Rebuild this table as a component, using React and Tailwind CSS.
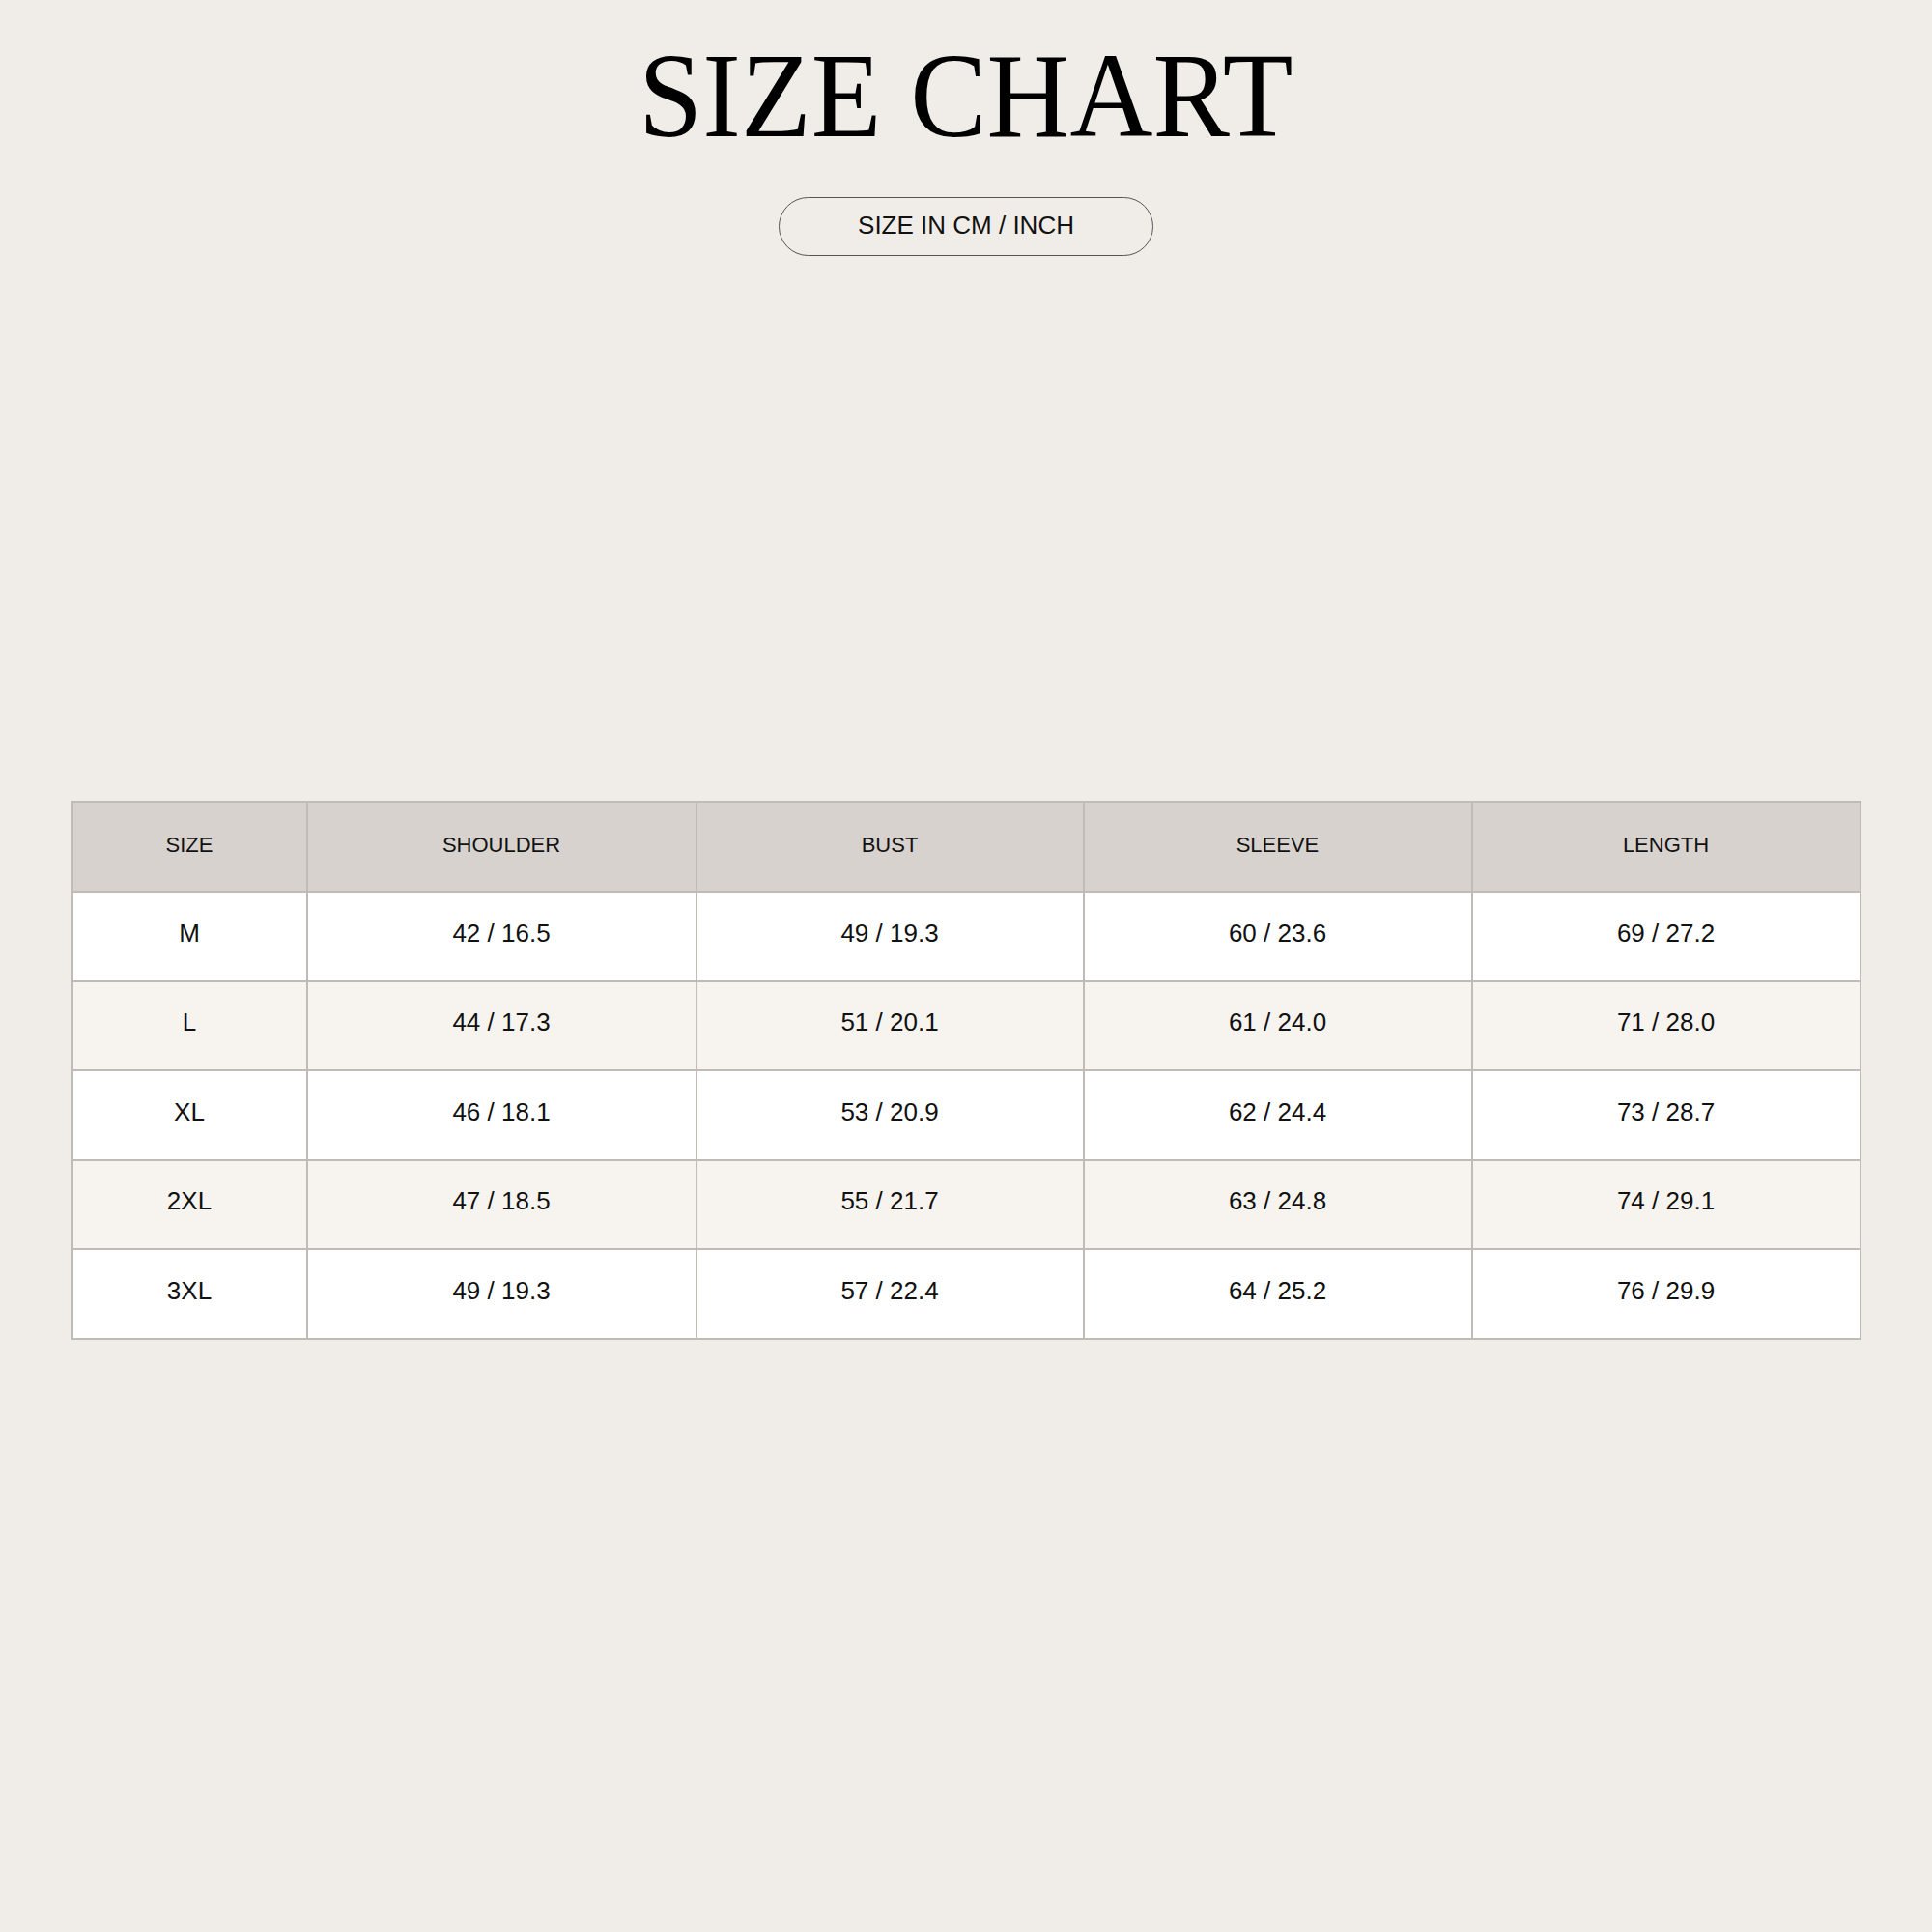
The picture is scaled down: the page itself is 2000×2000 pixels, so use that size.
import React from "react";

const headers = ["SIZE", "SHOULDER", "BUST", "SLEEVE", "LENGTH"];
const rows = [
  ["M", "42 / 16.5", "49 / 19.3", "60 / 23.6", "69 / 27.2"],
  ["L", "44 / 17.3", "51 / 20.1", "61 / 24.0", "71 / 28.0"],
  ["XL", "46 / 18.1", "53 / 20.9", "62 / 24.4", "73 / 28.7"],
  ["2XL", "47 / 18.5", "55 / 21.7", "63 / 24.8", "74 / 29.1"],
  ["3XL", "49 / 19.3", "57 / 22.4", "64 / 25.2", "76 / 29.9"],
];

export default function App() {
  return (
    <div className="w-[2000px] h-[2000px] bg-[#f0ede8] flex flex-col items-center text-[#111111] [font-family:'Liberation_Sans',Arial,sans-serif]">
      <h1 className="mt-[38px] h-[124px] text-[124px] leading-none font-normal whitespace-nowrap scale-x-[0.96] [font-family:'Liberation_Serif','Times_New_Roman',serif] text-black">
        SIZE CHART
      </h1>
      <div className="mt-[42px] w-[388px] h-[61px] pb-[4px] rounded-full border-[1.5px] border-[#555555] flex items-center justify-center text-[26px] leading-none">
        SIZE IN CM / INCH
      </div>
      <table className="mt-[564px] w-[1851px] table-fixed border-collapse border-2 border-[#c0bbb6]">
        <colgroup>
          <col className="w-[243px]" />
          <col className="w-[403px]" />
          <col className="w-[401px]" />
          <col className="w-[402px]" />
          <col className="w-[402px]" />
        </colgroup>
        <thead>
          <tr className="bg-[#d7d2cd] h-[93px]">
            {headers.map((h) => (
              <th key={h} className="border-2 border-[#c0bbb6] pb-[5px] text-[22px] font-normal text-center align-middle">
                {h}
              </th>
            ))}
          </tr>
        </thead>
        <tbody>
          {rows.map((r, i) => (
            <tr key={r[0]} className={`h-[92.5px] ${i % 2 === 1 ? "bg-[#f7f4ef]" : "bg-white"}`}>
              {r.map((c, j) => (
                <td key={j} className="border-2 border-[#c0bbb6] pb-[6px] text-[26px] text-center align-middle">
                  {c}
                </td>
              ))}
            </tr>
          ))}
        </tbody>
      </table>
    </div>
  );
}
